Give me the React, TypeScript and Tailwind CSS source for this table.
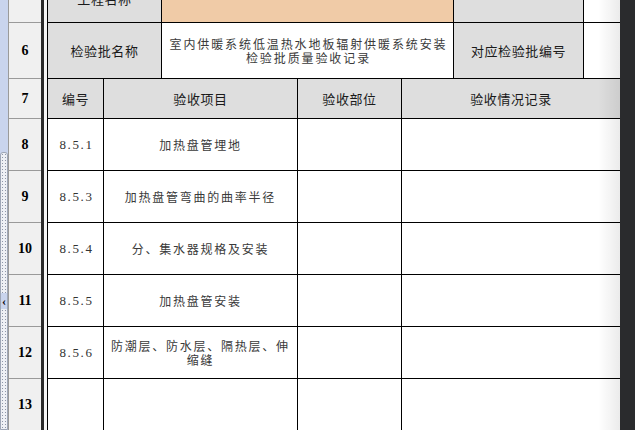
import React from "react";

const CJK = { fontFamily: '"Noto Sans CJK SC", "Noto Sans", sans-serif' };
const SERIF = { fontFamily: '"Liberation Serif", "Noto Sans CJK SC", serif' };

function RowHead({ n }: { n?: string }) {
  return (
    <>
      <div
        className="w-[33px] shrink-0 bg-[#f0f0f0] border-l border-b border-[#9a9a9a] flex items-center justify-center text-[14px] font-bold text-black"
        style={SERIF}
      >
        {n}
      </div>
      <div className="w-[3px] shrink-0 bg-[#2b2b2b]" />
      <div className="w-[3px] shrink-0 bg-[#f6f6f6]" />
    </>
  );
}

function Head({ children }: { children?: React.ReactNode }) {
  return (
    <span className="text-[13px] tracking-[0.6px] text-[#1a1a1a]" style={CJK}>
      {children}
    </span>
  );
}

function Body({ children }: { children?: React.ReactNode }) {
  return (
    <span className="text-[12px] tracking-[1.75px] text-[#3a3a3a] text-center leading-[14px]" style={CJK}>
      {children}
    </span>
  );
}

function Num({ children }: { children?: React.ReactNode }) {
  return (
    <span className="text-[13px] tracking-[1.6px] text-[#333]" style={SERIF}>
      {children}
    </span>
  );
}

const data: { no: string; item: React.ReactNode }[] = [
  { no: "8.5.1", item: "加热盘管埋地" },
  { no: "8.5.3", item: "加热盘管弯曲的曲率半径" },
  { no: "8.5.4", item: "分、集水器规格及安装" },
  { no: "8.5.5", item: "加热盘管安装" },
  {
    no: "8.5.6",
    item: (
      <>
        防潮层、防水层、隔热层、伸
        <br />
        缩缝
      </>
    ),
  },
];

export default function App() {
  return (
    <div className="relative flex w-[635px] h-[430px] overflow-hidden bg-white">
      {/* left strip */}
      <div className="w-[8px] shrink-0 flex flex-col bg-[#c9d4ed]">
        <div className="h-[152px] shrink-0" />
        <div className="flex-1 flex flex-col border border-[#9ea6b6] rounded-t-[3px] bg-[#eef0f5] overflow-hidden">
          <div className="h-[140px] shrink-0">
            <svg width="6" height="140" className="block">
              <defs>
                <pattern id="dots" width="6" height="3" patternUnits="userSpaceOnUse">
                  <rect x="1" y="1" width="1" height="1" fill="#8d96a8" />
                  <rect x="4" y="1" width="1" height="1" fill="#8d96a8" />
                </pattern>
              </defs>
              <rect width="6" height="140" fill="url(#dots)" />
            </svg>
          </div>
          <div className="h-[16px] shrink-0 bg-[#c9d4ed] flex items-center justify-center text-[12px] font-bold text-black leading-none" style={SERIF}>
            ‹
          </div>
          <div className="flex-1">
            <svg width="6" height="140" className="block">
              <rect width="6" height="140" fill="url(#dots)" />
            </svg>
          </div>
        </div>
      </div>

      {/* sheet */}
      <div className="flex-1 overflow-hidden">
        <div className="-mt-[24px] flex flex-col">
          {/* row 5 */}
          <div className="flex h-[47px]">
            <RowHead />
            <div className="w-[115px] shrink-0 border-l border-r border-b border-black bg-[#dedede] flex items-center justify-center">
              <Head>工程名称</Head>
            </div>
            <div className="w-[292px] shrink-0 border-r border-b border-black bg-[#f0cba7]" />
            <div className="w-[130px] shrink-0 border-r border-b border-black bg-[#dedede]" />
            <div className="flex-1 border-b border-black bg-white" />
          </div>
          {/* row 6 */}
          <div className="flex h-[56px]">
            <RowHead n="6" />
            <div className="w-[115px] shrink-0 border-l border-r border-b border-black bg-[#dedede] flex items-center justify-center">
              <Head>检验批名称</Head>
            </div>
            <div className="w-[292px] shrink-0 border-r border-b border-black bg-white flex items-center justify-center pl-[2px]">
              <span className="text-[12px] tracking-[1.9px] text-[#3a3a3a] text-center leading-[14px]" style={CJK}>
                室内供暖系统低温热水地板辐射供暖系统安装
                <br />
                检验批质量验收记录
              </span>
            </div>
            <div className="w-[130px] shrink-0 border-r border-b border-black bg-[#dedede] flex items-center justify-center">
              <Head>对应检验批编号</Head>
            </div>
            <div className="flex-1 border-b border-black bg-white" />
          </div>
          {/* row 7 */}
          <div className="flex h-[40px]">
            <RowHead n="7" />
            <div className="w-[57px] shrink-0 border-l border-r border-b border-black bg-[#dedede] flex items-center justify-center">
              <Head>编号</Head>
            </div>
            <div className="w-[194px] shrink-0 border-r border-b border-black bg-[#dedede] flex items-center justify-center">
              <Head>验收项目</Head>
            </div>
            <div className="w-[104px] shrink-0 border-r border-b border-black bg-[#dedede] flex items-center justify-center">
              <Head>验收部位</Head>
            </div>
            <div className="flex-1 border-b border-black bg-[#dedede] flex items-center justify-center">
              <Head>验收情况记录</Head>
            </div>
          </div>
          {/* data rows */}
          {data.map((r, i) => (
            <div key={r.no} className="flex h-[52px]">
              <RowHead n={String(8 + i)} />
              <div className="w-[57px] shrink-0 border-l border-r border-b border-black flex items-center justify-center pl-[2px]">
                <Num>{r.no}</Num>
              </div>
              <div className="w-[194px] shrink-0 border-r border-b border-black flex items-center justify-center px-[6px]">
                <Body>{r.item}</Body>
              </div>
              <div className="w-[104px] shrink-0 border-r border-b border-black" />
              <div className="flex-1 border-b border-black" />
            </div>
          ))}
          <div className="flex h-[52px]">
            <RowHead n="13" />
            <div className="w-[57px] shrink-0 border-l border-r border-b border-black" />
            <div className="w-[194px] shrink-0 border-r border-b border-black" />
            <div className="w-[104px] shrink-0 border-r border-b border-black" />
            <div className="flex-1 border-b border-black" />
          </div>
        </div>
      </div>

      {/* right shadow + dark panel */}
      <div className="pointer-events-none absolute top-0 right-[15px] w-[22px] h-full bg-gradient-to-r from-transparent to-[#00000014]" />
      <div className="w-[15px] shrink-0 bg-[#2a2b2d]" />
    </div>
  );
}
